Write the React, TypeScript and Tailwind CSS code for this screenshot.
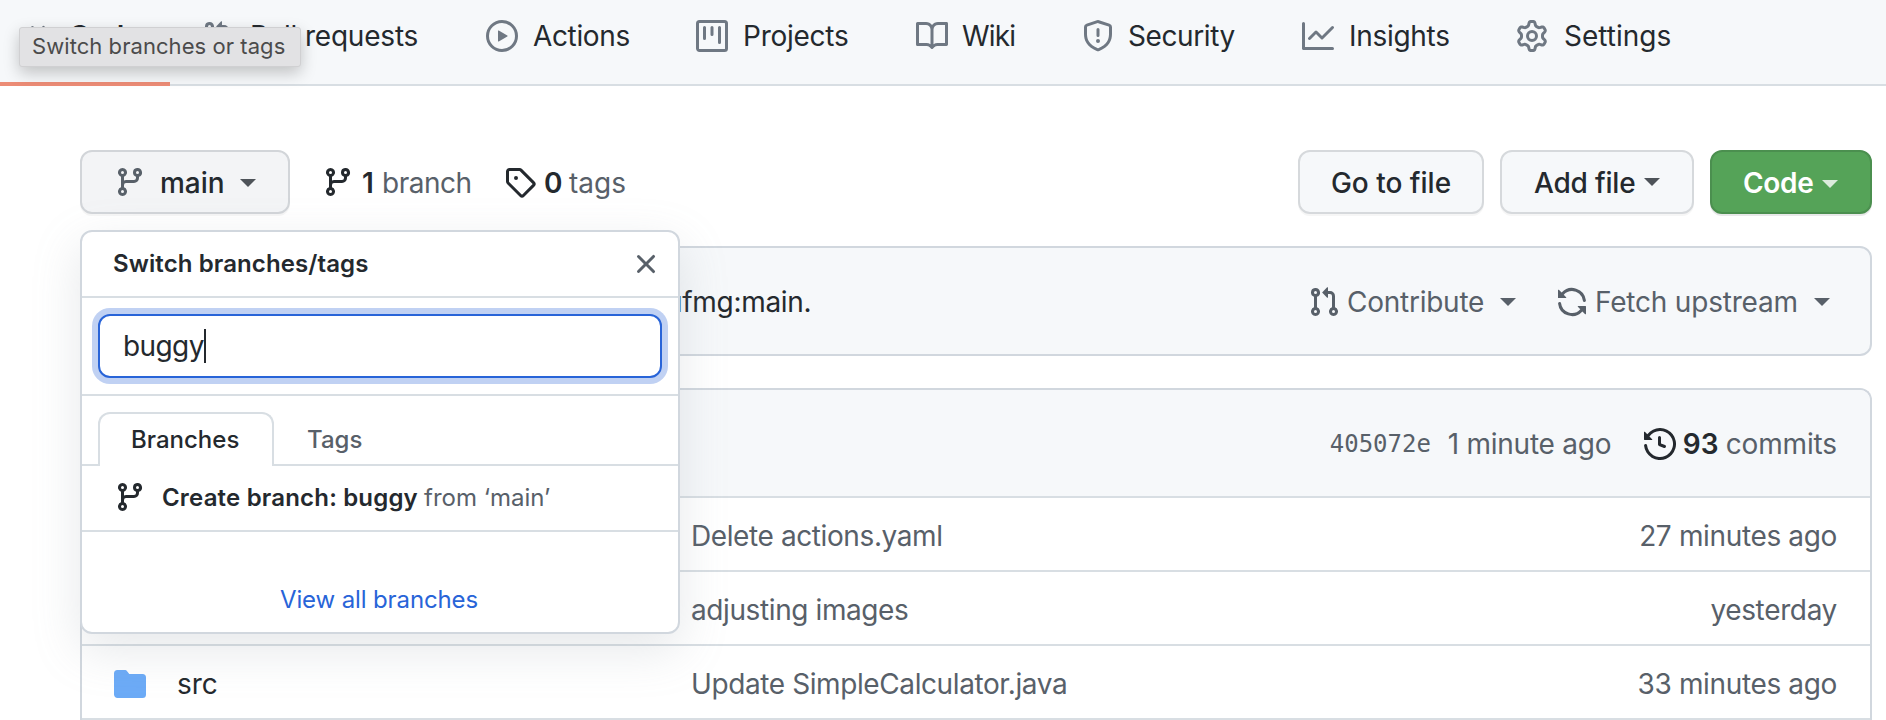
import React from 'react';

const paths = {
  code: 'M4.72 3.22a.75.75 0 011.06 1.06L2.06 8l3.72 3.72a.75.75 0 11-1.06 1.06L.47 8.53a.75.75 0 010-1.06l4.25-4.25zm6.56 0a.75.75 0 10-1.06 1.06L13.94 8l-3.72 3.72a.75.75 0 101.06 1.06l4.25-4.25a.75.75 0 000-1.06l-4.25-4.25z',
  pull: 'M7.177 3.073L9.573.677A.25.25 0 0110 .854v4.792a.25.25 0 01-.427.177L7.177 3.427a.25.25 0 010-.354zM3.75 2.5a.75.75 0 100 1.5.75.75 0 000-1.5zm-2.25.75a2.25 2.25 0 113 2.122v5.256a2.251 2.251 0 11-1.5 0V5.372A2.25 2.25 0 011.5 3.25zM11 2.5h-1V4h1a1 1 0 011 1v5.628a2.251 2.251 0 101.5 0V5A2.5 2.5 0 0011 2.5zm1 10.25a.75.75 0 111.5 0 .75.75 0 01-1.5 0zM3.75 12a.75.75 0 100 1.5.75.75 0 000-1.5z',
  play: 'M1.5 8a6.5 6.5 0 1113 0 6.5 6.5 0 01-13 0zM8 0a8 8 0 100 16A8 8 0 008 0zM6.379 5.227A.25.25 0 006 5.442v5.117a.25.25 0 00.379.214l4.264-2.559a.25.25 0 000-.428L6.379 5.227z',
  project: 'M1.75 0A1.75 1.75 0 000 1.75v12.5C0 15.216.784 16 1.75 16h12.5A1.75 1.75 0 0016 14.25V1.75A1.75 1.75 0 0014.25 0H1.75zM1.5 1.75a.25.25 0 01.25-.25h12.5a.25.25 0 01.25.25v12.5a.25.25 0 01-.25.25H1.75a.25.25 0 01-.25-.25V1.75zM11.75 3a.75.75 0 00-.75.75v7.5a.75.75 0 001.5 0v-7.5a.75.75 0 00-.75-.75zm-8.25.75a.75.75 0 011.5 0v5.5a.75.75 0 01-1.5 0v-5.5zM8 3a.75.75 0 00-.75.75v3.5a.75.75 0 001.5 0v-3.5A.75.75 0 008 3z',
  book: 'M0 1.75A.75.75 0 01.75 1h4.253c1.227 0 2.317.59 3 1.501A3.744 3.744 0 0111.006 1h4.245a.75.75 0 01.75.75v10.5a.75.75 0 01-.75.75h-4.507a2.25 2.25 0 00-1.591.659l-.622.621a.75.75 0 01-1.06 0l-.622-.621A2.25 2.25 0 005.258 13H.75a.75.75 0 01-.75-.75V1.75zm8.755 3a2.25 2.25 0 012.25-2.25H14.5v9h-3.757c-.71 0-1.4.201-1.992.572l.004-7.322zm-1.504 7.324l.004-5.073-.002-2.253A2.25 2.25 0 005.003 2.5H1.5v9h3.757a3.75 3.75 0 011.994.574z',
  shield: 'M7.467.133a1.75 1.75 0 011.066 0l5.25 1.68A1.75 1.75 0 0115 3.48V7c0 1.566-.32 3.182-1.303 4.682-.983 1.498-2.585 2.813-5.032 3.855a1.7 1.7 0 01-1.33 0c-2.447-1.042-4.049-2.357-5.032-3.855C1.32 10.182 1 8.566 1 7V3.48a1.75 1.75 0 011.217-1.667l5.25-1.68zm.61 1.429a.25.25 0 00-.153 0l-5.25 1.68a.25.25 0 00-.174.238V7c0 1.358.275 2.666 1.057 3.86.784 1.194 2.121 2.34 4.366 3.297a.2.2 0 00.154 0c2.245-.956 3.582-2.104 4.366-3.298C13.225 9.666 13.5 8.36 13.5 7V3.48a.25.25 0 00-.174-.237l-5.25-1.68zM9 10.5a1 1 0 11-2 0 1 1 0 012 0zm-.25-5.75a.75.75 0 10-1.5 0v3a.75.75 0 001.5 0v-3z',
  graph: 'M1.5 1.75a.75.75 0 00-1.5 0v12.5c0 .414.336.75.75.75h14.5a.75.75 0 000-1.5H1.5V1.75zm14.28 2.53a.75.75 0 00-1.06-1.06L10 7.94 7.53 5.47a.75.75 0 00-1.06 0L3.22 8.72a.75.75 0 001.06 1.06L7 7.06l2.47 2.47a.75.75 0 001.06 0l5.25-5.25z',
  gear: 'M7.429 1.525a6.593 6.593 0 011.142 0c.036.003.108.036.137.146l.289 1.105c.147.56.55.967.997 1.189.174.086.341.183.501.29.417.278.97.423 1.53.27l1.102-.303c.11-.03.175.016.195.046.219.31.41.641.573.989.014.031.022.11-.059.19l-.815.806c-.411.406-.562.957-.53 1.456a4.588 4.588 0 010 .582c-.032.499.119 1.05.53 1.456l.815.806c.08.08.073.159.059.19a6.494 6.494 0 01-.573.99c-.02.029-.086.074-.195.045l-1.103-.303c-.559-.153-1.112-.008-1.529.27-.16.107-.327.204-.5.29-.449.222-.851.628-.998 1.189l-.289 1.105c-.029.11-.101.143-.137.146a6.613 6.613 0 01-1.142 0c-.036-.003-.108-.037-.137-.146l-.289-1.105c-.147-.56-.55-.967-.997-1.189a4.502 4.502 0 01-.501-.29c-.417-.278-.97-.423-1.53-.27l-1.102.303c-.11.03-.175-.016-.195-.046a6.492 6.492 0 01-.573-.989c-.014-.031-.022-.11.059-.19l.815-.806c.411-.406.562-.957.53-1.456a4.587 4.587 0 010-.582c.032-.499-.119-1.05-.53-1.456l-.815-.806c-.08-.08-.073-.159-.059-.19a6.44 6.44 0 01.573-.99c.02-.029.086-.075.195-.045l1.103.303c.559.153 1.112.008 1.529-.27.16-.107.327-.204.5-.29.449-.222.851-.628.998-1.189l.289-1.105c.029-.11.101-.143.137-.146zM8 0c-.236 0-.47.01-.701.03-.743.065-1.29.615-1.458 1.261l-.29 1.106c-.017.066-.078.158-.211.224a5.994 5.994 0 00-.668.386c-.123.082-.233.09-.3.071L3.27 2.776c-.644-.177-1.392.02-1.82.63a7.977 7.977 0 00-.704 1.217c-.315.675-.111 1.422.363 1.891l.815.806c.05.048.098.147.088.294a6.084 6.084 0 000 .772c.01.147-.038.246-.088.294l-.815.806c-.474.469-.678 1.216-.363 1.891.2.428.436.835.704 1.218.428.609 1.176.806 1.82.63l1.103-.303c.066-.019.176-.011.299.071.213.143.436.272.668.386.133.066.194.158.212.224l.289 1.106c.169.646.715 1.196 1.458 1.26a8.094 8.094 0 001.402 0c.743-.064 1.29-.614 1.458-1.26l.29-1.106c.017-.066.078-.158.211-.224a5.98 5.98 0 00.668-.386c.123-.082.233-.09.3-.071l1.102.302c.644.177 1.392-.02 1.82-.63.268-.382.505-.789.704-1.217.315-.675.111-1.422-.364-1.891l-.814-.806c-.05-.048-.098-.147-.088-.294a6.1 6.1 0 000-.772c-.01-.147.039-.246.088-.294l.814-.806c.475-.469.679-1.216.364-1.891a7.992 7.992 0 00-.704-1.218c-.428-.609-1.176-.806-1.82-.63l-1.103.303c-.066.019-.176.011-.299-.071a5.991 5.991 0 00-.668-.386c-.133-.066-.194-.158-.212-.224L10.16 1.29C9.99.645 9.444.095 8.701.031A8.094 8.094 0 008 0zm1.5 8a1.5 1.5 0 11-3 0 1.5 1.5 0 013 0zM11 8a3 3 0 11-6 0 3 3 0 016 0z',
  branch: 'M11.75 2.5a.75.75 0 100 1.5.75.75 0 000-1.5zm-2.25.75a2.25 2.25 0 113 2.122V6A2.5 2.5 0 0110 8.5H6a1 1 0 00-1 1v1.128a2.251 2.251 0 11-1.5 0V5.372a2.25 2.25 0 111.5 0v1.836A2.492 2.492 0 016 7h4a1 1 0 001-1v-.628A2.25 2.25 0 019.5 3.25zM4.25 12a.75.75 0 100 1.5.75.75 0 000-1.5zM3.5 3.25a.75.75 0 111.5 0 .75.75 0 01-1.5 0z',
  tag: 'M2.5 7.775V2.75a.25.25 0 01.25-.25h5.025a.25.25 0 01.177.073l6.25 6.25a.25.25 0 010 .354l-5.025 5.025a.25.25 0 01-.354 0l-6.25-6.25a.25.25 0 01-.073-.177zm-1.5 0V2.75C1 1.784 1.784 1 2.75 1h5.025c.464 0 .91.184 1.238.513l6.25 6.25a1.75 1.75 0 010 2.474l-5.026 5.026a1.75 1.75 0 01-2.474 0l-6.25-6.25A1.75 1.75 0 011 7.775zM6 5a1 1 0 100 2 1 1 0 000-2z',
  sync: 'M8 2.5a5.487 5.487 0 00-4.131 1.869l1.204 1.204A.25.25 0 014.896 6H1.25A.25.25 0 011 5.75V2.104a.25.25 0 01.427-.177l1.38 1.38A7.001 7.001 0 0114.95 7.16a.75.75 0 11-1.49.178A5.501 5.501 0 008 2.5zM1.705 8.005a.75.75 0 01.834.656 5.501 5.501 0 009.592 2.97l-1.204-1.204a.25.25 0 01.177-.427h3.646a.25.25 0 01.25.25v3.646a.25.25 0 01-.427.177l-1.38-1.38A7.001 7.001 0 011.05 8.84a.75.75 0 01.656-.834z',
  history: 'M1.643 3.143L.427 1.927A.25.25 0 000 2.104V5.75c0 .138.112.25.25.25h3.646a.25.25 0 00.177-.427L2.715 4.215a6.5 6.5 0 11-1.18 4.458.75.75 0 10-1.493.154 8.001 8.001 0 101.6-5.684zM7.75 4a.75.75 0 01.75.75v2.992l2.028.812a.75.75 0 01-.557 1.392l-2.5-1A.75.75 0 017 8.25v-3.5A.75.75 0 017.75 4z',
  folder: 'M1.75 1A1.75 1.75 0 000 2.75v10.5C0 14.216.784 15 1.75 15h12.5A1.75 1.75 0 0016 13.25v-8.5A1.75 1.75 0 0014.25 3h-6.5a.25.25 0 01-.2-.1l-.9-1.2c-.33-.44-.85-.7-1.4-.7h-3.5z',
  x: 'M3.72 3.72a.75.75 0 011.06 0L8 6.94l3.22-3.22a.75.75 0 111.06 1.06L9.06 8l3.22 3.22a.75.75 0 11-1.06 1.06L8 9.06l-3.22 3.22a.75.75 0 01-1.06-1.06L6.94 8 3.72 4.78a.75.75 0 010-1.06z',
};

function Icon({ name, className = '' }: { name: keyof typeof paths; className?: string }) {
  return (
    <svg viewBox="0 0 16 16" className={`size-8 shrink-0 ${className}`} fill="currentColor" fillRule="evenodd">
      <path d={paths[name]} />
    </svg>
  );
}

function Caret({ className = '' }: { className?: string }) {
  return (
    <svg viewBox="0 0 16 8" className={`h-2 w-4 shrink-0 ${className}`} fill="currentColor">
      <path d="M0 0h16L8 8z" />
    </svg>
  );
}

const tabs: { icon: keyof typeof paths; label: string; width: string; text: string }[] = [
  { icon: 'code', label: 'Code', width: 'w-[180px]', text: 'font-semibold' },
  { icon: 'pull', label: 'Pull requests', width: 'w-[284px]', text: 'pl-px tracking-[-0.2px]' },
  { icon: 'play', label: 'Actions', width: 'w-[210px]', text: 'tracking-[-0.35px]' },
  { icon: 'project', label: 'Projects', width: 'w-[220px]', text: 'tracking-[-0.25px]' },
  { icon: 'book', label: 'Wiki', width: 'w-[166px]', text: '-ml-px tracking-[-0.8px]' },
  { icon: 'shield', label: 'Security', width: 'w-[220px]', text: '-ml-px tracking-[-0.4px]' },
  { icon: 'graph', label: 'Insights', width: 'w-[214px]', text: 'tracking-[-0.3px]' },
  { icon: 'gear', label: 'Settings', width: 'w-[170px]', text: 'pl-px' },
];

const files = [
  { name: '', message: 'Delete actions.yaml', time: '27 minutes ago' },
  { name: '', message: 'adjusting images', time: 'yesterday' },
  { name: 'src', message: 'Update SimpleCalculator.java', time: '33 minutes ago' },
];

function BranchMenu() {
  return (
    <div className="absolute left-0 top-20 z-10 flex h-[404px] w-[600px] flex-col rounded-xl border-2 border-[#d1d7de] bg-white text-2xl shadow-[0_16px_48px_rgba(140,149,159,0.22)]">
      <div className="flex h-[66px] items-center justify-between border-b-2 border-[#d8dee3] pl-[31px] pr-4">
        <span className="font-semibold tracking-[0.1px]">Switch branches/tags</span>
        <Icon name="x" className="text-[#586069]" />
      </div>
      <div className="border-b-2 border-[#d8dee3] p-4">
        <div className="flex h-16 items-center rounded-xl border-2 border-[#2864d8] bg-white pl-[23px] text-[28px] shadow-[0_0_0_6px_#c0d1f3]">
          <span className="pt-0.5 tracking-[-0.6px]">buggy</span>
          <span className="h-[34px] w-0.5 bg-[#24292e]" />
        </div>
      </div>
      <div className="flex h-[70px] items-end pt-4">
        <div className="h-full w-4 border-b-2 border-[#d8dee3]" />
        <div className="flex h-full w-[176px] items-center rounded-t-xl border-2 border-b-0 border-[#d8dee3] pl-[31px] font-medium">Branches</div>
        <div className="flex h-full flex-1 items-center border-b-2 border-[#d8dee3] pl-[33px] pt-1 font-medium text-[#586069]">Tags</div>
      </div>
      <div className="flex h-[66px] items-center border-b-2 border-[#d8dee3] pl-8">
        <Icon name="branch" className="-mt-0.5" />
        <span className="ml-4 w-[262px] whitespace-nowrap font-semibold tracking-[0.18px]">Create branch: buggy</span>
        <span className="whitespace-nowrap text-[#586069]">from ‘main’</span>
      </div>
      <div className="flex flex-1 items-end justify-center pb-4 pr-0.5 tracking-[-0.12px] text-[#2864d8]">View all branches</div>
    </div>
  );
}

export default function App() {
  return (
    <div className="relative h-[720px] w-[1886px] overflow-hidden bg-white font-['Inter',sans-serif] text-[28px] leading-9 text-[#24292e]">
      <nav className="h-[86px] border-b-2 border-[#d8dee3] bg-[#f6f8fa]">
        <div className="flex h-[72px] items-center pl-[22px]">
          {tabs.map((t) => (
            <div key={t.label} className={`flex shrink-0 items-center gap-[15px] whitespace-nowrap ${t.width}`}>
              <Icon name={t.icon} className="text-[#6f7883]" />
              <span className={t.text}>{t.label}</span>
            </div>
          ))}
        </div>
        <div className="mt-2.5 h-1 w-[170px] bg-[#ec8c76]" />
      </nav>
      <div className="absolute left-[19px] top-[27px] flex h-10 w-[282px] items-center whitespace-nowrap rounded-[3px] border border-[#d0d0d2] bg-[#e2e2e4] pb-[3px] pl-3 text-[22px] tracking-[0.06px] text-[#4b4b4b] shadow-[0_6px_16px_rgba(0,0,0,0.22)]">
        Switch branches or tags
      </div>

      <main className="w-[1872px] pl-20 pt-16">
        <div className="flex h-16 items-center">
          <div className="relative">
            <button className="flex h-16 w-[210px] items-center rounded-xl border-2 border-[#d2d5d9] bg-[#f3f4f6] pl-8 font-medium shadow-[0_2px_0_rgba(27,31,35,0.04)]">
              <Icon name="branch" className="text-[#586069]" />
              <span className="ml-[14px] w-20 pt-0.5 text-left">main</span>
              <Caret className="mt-0.5 text-[#4e5359]" />
            </button>
            <BranchMenu />
          </div>
          <Icon name="branch" className="ml-8" />
          <span className="ml-2 w-[20px] pt-0.5 font-semibold">1</span>
          <span className="w-[122px] pt-0.5 tracking-[-0.5px] text-[#586069]">branch</span>
          <Icon name="tag" />
          <span className="ml-2 w-[25px] pt-0.5 font-semibold">0</span>
          <span className="pt-0.5 text-[#586069]">tags</span>
          <div className="ml-auto flex gap-4 whitespace-nowrap font-medium">
            <button className="h-16 w-[186px] rounded-xl border-2 border-[#d6d9dc] bg-[#f6f8fa] pt-0.5 shadow-[0_2px_0_rgba(27,31,35,0.04)]">Go to file</button>
            <button className="flex h-16 w-[194px] items-center rounded-xl border-2 border-[#d6d9dc] bg-[#f6f8fa] pl-8 shadow-[0_2px_0_rgba(27,31,35,0.04)]">
              <span className="w-[110px] pt-0.5 text-left tracking-[-0.2px]">Add file</span>
              <Caret className="text-[#4e5359]" />
            </button>
            <button className="flex h-16 w-[162px] items-center rounded-xl border-2 border-[#4b8f4f] bg-[#55a358] pl-[31px] text-white shadow-[0_2px_0_rgba(27,31,35,0.1)]">
              <span className="w-[79px] pt-0.5 text-left font-semibold tracking-[-0.3px]">Code</span>
              <Caret className="mt-1 text-[#dcecdc]" />
            </button>
          </div>
        </div>

        <div className="mt-8 flex h-[110px] items-center rounded-xl border-2 border-[#d1d7de] bg-[#f6f8fa] pt-0.5">
          <span className="ml-[584px] tracking-[-0.3px]">ufmg:main.</span>
          <div className="ml-auto flex w-[562px] items-center whitespace-nowrap text-[#586069]">
            <Icon name="pull" />
            <span className="ml-[7px] w-[153px] tracking-[-0.25px]">Contribute</span>
            <Caret />
            <Icon name="sync" className="ml-10" />
            <span className="ml-[7px] w-[219px] tracking-[-0.2px]">Fetch upstream</span>
            <Caret />
          </div>
        </div>

        <div className="mt-8 rounded-t-xl border-2 border-b-0 border-[#d1d7de]">
          <div className="flex h-[106px] items-center justify-end rounded-t-[10px] bg-[#f6f8fa] pr-[33px] pt-0.5 text-[#586069]">
            <span className="w-[118px] font-['DejaVu_Sans_Mono',monospace] text-2xl">405072e</span>
            <span className="w-[196px] tracking-[-0.25px]">1 minute ago</span>
            <Icon name="history" className="text-[#24292e]" />
            <span className="ml-[7px] w-[43px] font-semibold text-[#24292e]">93</span>
            <span className="tracking-[-0.15px]">commits</span>
          </div>
          {files.map((f) => (
            <div key={f.message} className="flex h-[74px] items-center border-t-2 border-[#d8dee3] pl-8 pr-[33px] pt-1 tracking-[-0.4px] text-[#586069]">
              <Icon name="folder" className="text-[#6cabf7]" />
              <span className="w-[545px] pl-[31px] tracking-normal text-[#24292e]">{f.name}</span>
              <span className="flex-1">{f.message}</span>
              <span className="tracking-[-0.35px]">{f.time}</span>
            </div>
          ))}
          <div className="h-0.5 bg-[#d8dee3]" />
        </div>
      </main>
    </div>
  );
}
